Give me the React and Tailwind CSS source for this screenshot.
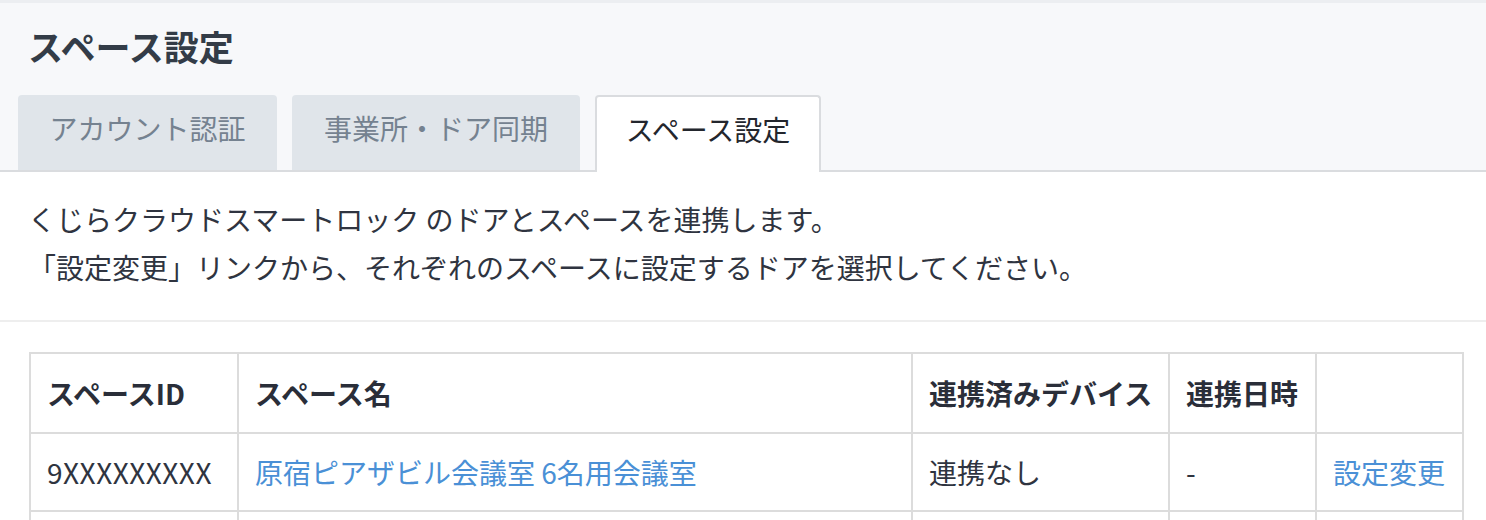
import { useState } from 'react'

const tabs = [
  { label: 'アカウント認証', width: 'w-[259px]' },
  { label: '事業所・ドア同期', width: 'w-[288px]' },
  { label: 'スペース設定', width: 'w-[226px]' },
]

const rows = [
  { id: '9XXXXXXXXX', name: '原宿ピアザビル会議室 6名用会議室', device: '連携なし', date: '-' },
  { id: '', name: '', device: '', date: '' },
]

export default function App() {
  const [active, setActive] = useState(2)

  return (
    <div className="h-[520px] overflow-hidden bg-white font-['Noto_Sans_CJK_JP',sans-serif] text-[#2f3440]">
      {/* header */}
      <div className="bg-[#f7f8fa] border-t-[3px] border-[#eceef1]">
        <h1 className="pt-[17px] pl-[28px] text-[35px] leading-[51px] font-bold text-[#333c47]">スペース設定</h1>
        <div className="mt-[24px] flex gap-[15px] pl-[18px] border-b-2 border-[#dadcdf]">
          {tabs.map((t, i) => (
            <button
              key={t.label}
              onClick={() => setActive(i)}
              className={
                i === active
                  ? `${t.width} h-[77px] -mb-[2px] pb-[12px] rounded-t-[4px] border-2 border-b-0 border-[#dadcdf] bg-white text-[28px] text-[#23262d] flex items-center justify-center`
                  : `${t.width} h-[75px] pb-[10px] rounded-t-[4px] bg-[#e0e5ea] text-[28px] text-[#758290] flex items-center justify-center`
              }
            >
              {t.label}
            </button>
          ))}
        </div>
      </div>

      {/* description */}
      <div className="pt-[23px] pb-[29px] pl-[28px] text-[28px] leading-[48px] text-[#2f3440] border-b-2 border-[#eeeeee]">
        <p>くじらクラウドスマートロック のドアとスペースを連携します。</p>
        <p>「設定変更」リンクから、それぞれのスペースに設定するドアを選択してください。</p>
      </div>

      {/* table */}
      <div className="pt-[30px] pl-[29px] pr-[24px]">
        <table className="w-[1433px] table-fixed border-collapse text-[28px]">
          <colgroup>
            <col className="w-[208px]" />
            <col className="w-[674px]" />
            <col className="w-[257px]" />
            <col className="w-[147px]" />
            <col className="w-[147px]" />
          </colgroup>
          <thead>
            <tr className="text-left font-bold text-[#2a2e39]">
              <th className="border-2 border-[#dcdcdc] px-4 py-[18px] leading-[42px]">スペースID</th>
              <th className="border-2 border-[#dcdcdc] px-4 py-[18px] leading-[42px]">スペース名</th>
              <th className="border-2 border-[#dcdcdc] px-4 py-[18px] leading-[42px] whitespace-nowrap">連携済みデバイス</th>
              <th className="border-2 border-[#dcdcdc] px-4 py-[18px] leading-[42px]">連携日時</th>
              <th className="border-2 border-[#dcdcdc] px-4 py-[18px] leading-[42px]"></th>
            </tr>
          </thead>
          <tbody>
            {rows.map((r, i) => (
              <tr key={i} className="text-[#2f3440]">
                <td className="border-2 border-[#dcdcdc] px-4 py-[17px] leading-[42px] h-[78px] tracking-[0.5px]">{r.id}</td>
                <td className="border-2 border-[#dcdcdc] px-4 py-[17px] leading-[42px]">
                  <a href="#" className="text-[#4a90d6]">{r.name}</a>
                </td>
                <td className="border-2 border-[#dcdcdc] px-4 py-[17px] leading-[42px]">{r.device}</td>
                <td className="border-2 border-[#dcdcdc] px-4 py-[17px] leading-[42px]">{r.date}</td>
                <td className="border-2 border-[#dcdcdc] px-4 py-[17px] leading-[42px]">
                  {r.id && <a href="#" className="text-[#4a90d6]">設定変更</a>}
                </td>
              </tr>
            ))}
          </tbody>
        </table>
      </div>
    </div>
  )
}
